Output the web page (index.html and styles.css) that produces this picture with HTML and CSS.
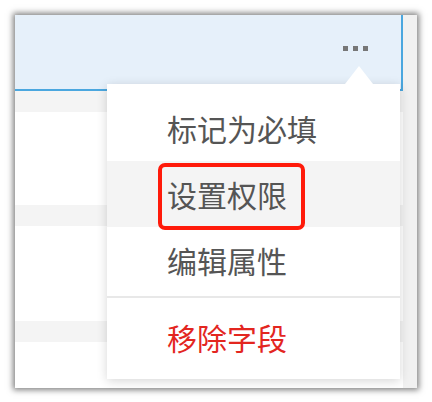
FILE: index.html
```html
<!DOCTYPE html>
<html lang="zh-CN">

<head>
  <meta charset="UTF-8" />
  <title>字段菜单</title>
  <link rel="stylesheet" href="styles.css">
</head>

<body>

  <div class="frame">
    <div class="main-col">
      <div class="field-head">
        <div class="more-btn">
          <span class="dot"></span>
          <span class="dot"></span>
          <span class="dot"></span>
        </div>
      </div>
      <div class="row-gap"></div>
      <div class="row-blank"></div>
      <div class="row-gap"></div>
      <div class="row-blank tall"></div>
      <div class="row-gap"></div>
      <div class="row-rest"></div>
    </div>
    <div class="side-strip"></div>

    <!-- dropdown menu -->
    <ul class="field-menu">
      <li class="menu-item">标记为必填</li>
      <li class="menu-item hover">设置权限<span class="mark-box"></span></li>
      <li class="menu-item">编辑属性</li>
      <li class="menu-line"></li>
      <li class="menu-item danger">移除字段</li>
    </ul>
  </div>

</body>

</html>
```

FILE: styles.css
```css
body {
  margin: 0;
  background: #fff;
  font-family: "Microsoft YaHei", "Noto Sans CJK SC", sans-serif;
}

.frame {
  position: relative;
  margin: 15px;
  width: 402px;
  height: 373px;
  display: flex;
  background: #fff;
  box-shadow: 0 0 6px 2px rgba(0, 0, 0, 0.5);
}

.main-col {
  width: 388px;
  display: flex;
  flex-direction: column;
}

.field-head {
  box-sizing: border-box;
  height: 76px;
  background: #e6f0fa;
  border-bottom: 2px solid #4ba7df;
  border-right: 2px solid #4ba7df;
  display: flex;
  justify-content: flex-end;
  align-items: flex-start;
  padding: 31px 33px 0 0;
}

.more-btn {
  display: flex;
  gap: 5px;
}

.dot {
  width: 5px;
  height: 5px;
  background: #777;
}

.row-gap {
  height: 21px;
  background: #f4f4f4;
}

.row-blank {
  height: 93px;
}

.row-blank.tall {
  height: 95px;
}

.row-rest {
  flex: 1;
}

.side-strip {
  width: 14px;
  background: #f1f1f1;
}

.field-menu {
  position: absolute;
  left: 92px;
  top: 69px;
  width: 293px;
  margin: 0;
  padding: 11px 0 9px;
  list-style: none;
  background: #fff;
  box-shadow: 0 2px 10px rgba(0, 0, 0, 0.16);
}

.field-menu::before {
  content: "";
  position: absolute;
  left: 238px;
  top: -18px;
  border-left: 14px solid transparent;
  border-right: 14px solid transparent;
  border-bottom: 18px solid #fff;
}

.menu-item {
  position: relative;
  height: 66px;
  line-height: 66px;
  padding-left: 60px;
  font-size: 30px;
  color: #555;
}

.menu-item.hover {
  background: #f4f4f4;
}

.menu-item.danger {
  color: #e3261f;
}

.menu-line {
  height: 2px;
  margin: 3px 0 6px;
  background: #e8e8e8;
}

.mark-box {
  position: absolute;
  left: 51px;
  top: 2px;
  width: 139px;
  height: 59px;
  border: 4px solid #ff1a0a;
  border-radius: 7px;
}
```
